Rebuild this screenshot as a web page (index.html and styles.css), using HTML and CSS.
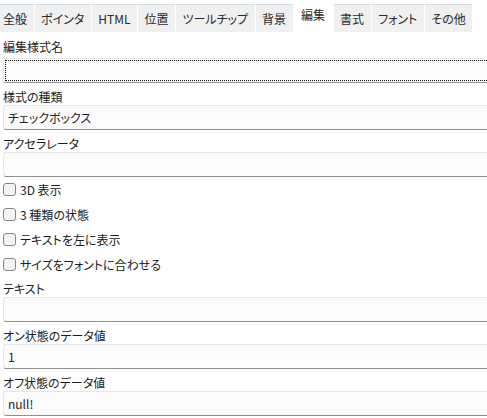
FILE: index.html
```html
<!DOCTYPE html>
<html lang="ja">
<head>
<meta charset="utf-8">
<link rel="stylesheet" href="styles.css">
</head>
<body>
<div class="tabs">
  <div class="tab">全般</div>
  <div class="tab">ポインタ</div>
  <div class="tab">HTML</div>
  <div class="tab">位置</div>
  <div class="tab">ツールチップ</div>
  <div class="tab">背景</div>
  <div class="tab active">編集</div>
  <div class="tab">書式</div>
  <div class="tab">フォント</div>
  <div class="tab">その他</div>
</div>
<div class="form">
  <div class="label first">編集様式名</div>
  <div class="input focused"></div>
  <div class="label">様式の種類</div>
  <div class="input">チェックボックス</div>
  <div class="label">アクセラレータ</div>
  <div class="input"></div>
  <div class="checks">
    <div class="check"><span class="box"></span>3D 表示</div>
    <div class="check"><span class="box"></span>3 種類の状態</div>
    <div class="check"><span class="box"></span>テキストを左に表示</div>
    <div class="check"><span class="box"></span>サイズをフォントに合わせる</div>
  </div>
  <div class="label">テキスト</div>
  <div class="input"></div>
  <div class="label">オン状態のデータ値</div>
  <div class="input">1</div>
  <div class="label">オフ状態のデータ値</div>
  <div class="input">null!</div>
</div>
</body>
</html>
```

FILE: styles.css
```css
html, body {
  margin: 0;
  padding: 0;
  background: #ffffff;
  overflow: hidden;
}
body {
  font-family: "Noto Sans CJK JP", "Noto Sans", sans-serif;
  font-size: 12px;
  color: #1c1c1c;
  font-feature-settings: "palt";
  width: 487px;
  height: 418px;
}
.tabs {
  display: flex;
  align-items: flex-end;
  height: 32px;
  gap: 1px;
}
.tab {
  height: 27px;
  line-height: 27px;
  padding: 0 6.5px;
  background: #f0f0f0;
  border-top: 1px solid #d5dbe3;
  color: #2a2a2a;
  white-space: nowrap;
}
.tab:first-child {
  padding-left: 3px;
}
.tab.active {
  height: 32px;
  line-height: 30px;
  border-top: none;
  background: #ffffff;
  padding: 0 7.5px;
}
.form {
  display: flex;
  flex-direction: column;
  padding-left: 3px;
  overflow: hidden;
}
.label {
  height: 22px;
  box-sizing: border-box;
  padding-top: 5px;
  line-height: 17px;
  white-space: nowrap;
}
.label.first {
  height: 26px;
  padding-top: 6px;
}
.input {
  width: calc(100% + 20px);
  height: 25px;
  box-sizing: border-box;
  background: #fbfbfb;
  border: 1px solid #e6e6e6;
  border-bottom: 1px solid #8f8f8f;
  border-radius: 3px;
  padding-left: 4px;
  line-height: 23px;
  color: #222;
  flex: none;
}
.input.focused {
  outline: 1px dotted #111;
  outline-offset: -3px;
}
.checks {
  display: flex;
  flex-direction: column;
  margin-bottom: -2px;
}
.check {
  height: 25px;
  display: flex;
  align-items: center;
  gap: 4px;
  white-space: nowrap;
}
.box {
  width: 13px;
  height: 13px;
  box-sizing: border-box;
  border: 1px solid #858585;
  border-radius: 3px;
  background: #f4f4f4;
  flex: none;
}
```
